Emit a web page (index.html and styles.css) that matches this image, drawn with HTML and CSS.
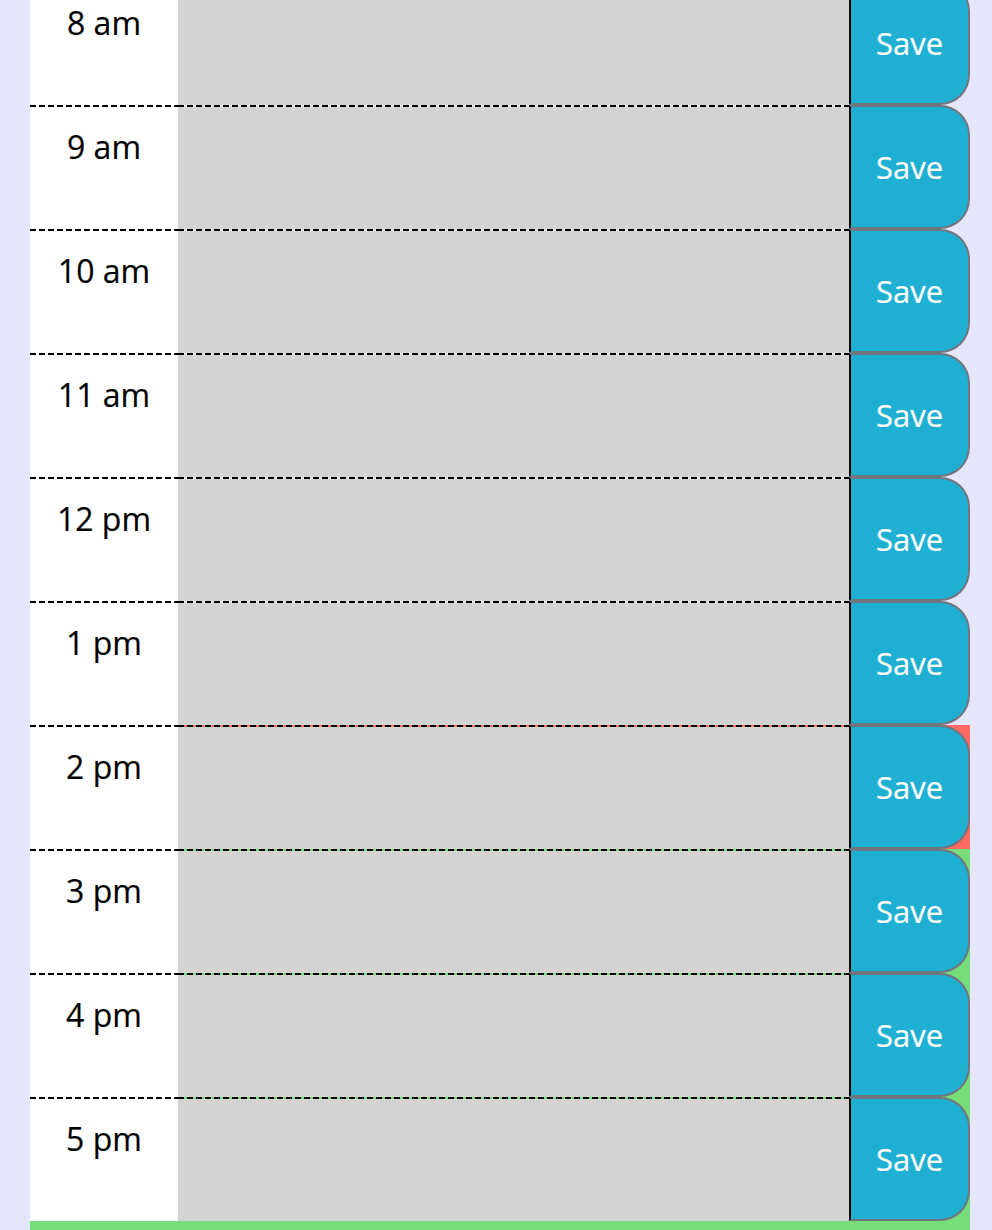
FILE: index.html
```html
<!DOCTYPE html>
<html lang="en">
<head>
<meta charset="utf-8">
<title>Work Day Scheduler</title>
<link rel="stylesheet" href="styles.css">
</head>
<body>
<div class="container">
  <div class="row past"><div class="hour">8 am</div><textarea class="description"></textarea><button class="saveBtn">Save</button></div>
  <div class="row past"><div class="hour">9 am</div><textarea class="description"></textarea><button class="saveBtn">Save</button></div>
  <div class="row past"><div class="hour">10 am</div><textarea class="description"></textarea><button class="saveBtn">Save</button></div>
  <div class="row past"><div class="hour">11 am</div><textarea class="description"></textarea><button class="saveBtn">Save</button></div>
  <div class="row past"><div class="hour">12 pm</div><textarea class="description"></textarea><button class="saveBtn">Save</button></div>
  <div class="row past"><div class="hour">1 pm</div><textarea class="description"></textarea><button class="saveBtn">Save</button></div>
  <div class="row present"><div class="hour">2 pm</div><textarea class="description"></textarea><button class="saveBtn">Save</button></div>
  <div class="row future"><div class="hour">3 pm</div><textarea class="description"></textarea><button class="saveBtn">Save</button></div>
  <div class="row future"><div class="hour">4 pm</div><textarea class="description"></textarea><button class="saveBtn">Save</button></div>
  <div class="row future last"><div class="hour">5 pm</div><textarea class="description"></textarea><button class="saveBtn">Save</button></div>
</div>
</body>
</html>
```

FILE: styles.css
```css
html, body {
  margin: 0;
  padding: 0;
  background: #e6e6fa;
  font-family: "Open Sans", "Noto Sans", sans-serif;
}

.container {
  margin: -19px 22px 0 30px;
  display: flex;
  flex-direction: column;
}

.row {
  display: flex;
  height: 124px;
}

.row.last {
  padding-bottom: 30px;
}

.past { background: transparent; }
.present { background: #ff6961; }
.future { background: #77dd77; }

.hour,
.description {
  border: none;
  border-top: 2px solid transparent;
  border-image-source: repeating-linear-gradient(90deg, #000 0 6px, transparent 6px 9px);
  border-image-slice: 2 0 0 0;
  border-image-width: 2px 0 0 0;
  border-image-repeat: stretch;
}

.hour {
  box-sizing: border-box;
  width: 148px;
  flex: none;
  height: 124px;
  background: #ffffff;
  color: #000000;
  text-align: center;
  font-size: 32px;
  line-height: 44px;
  padding-top: 18px;
  -webkit-text-stroke: 0.2px #000;
}

.description {
  box-sizing: border-box;
  flex: 1;
  height: 124px;
  margin: 0;
  padding: 0;
  resize: none;
  background: #d3d3d3;
  background-clip: padding-box;
  outline: none;
}

.saveBtn {
  box-sizing: border-box;
  width: 121px;
  flex: none;
  height: 124px;
  margin: 0;
  padding: 0;
  background: #1fafd3;
  color: #ffffff;
  font-family: "Open Sans", "Noto Sans", sans-serif;
  font-size: 31px;
  -webkit-text-stroke: 0.2px #fff;
  border: 2px solid #6f7680;
  border-left: 2px solid #000000;
  border-radius: 0 30px 30px 0;
}
```
